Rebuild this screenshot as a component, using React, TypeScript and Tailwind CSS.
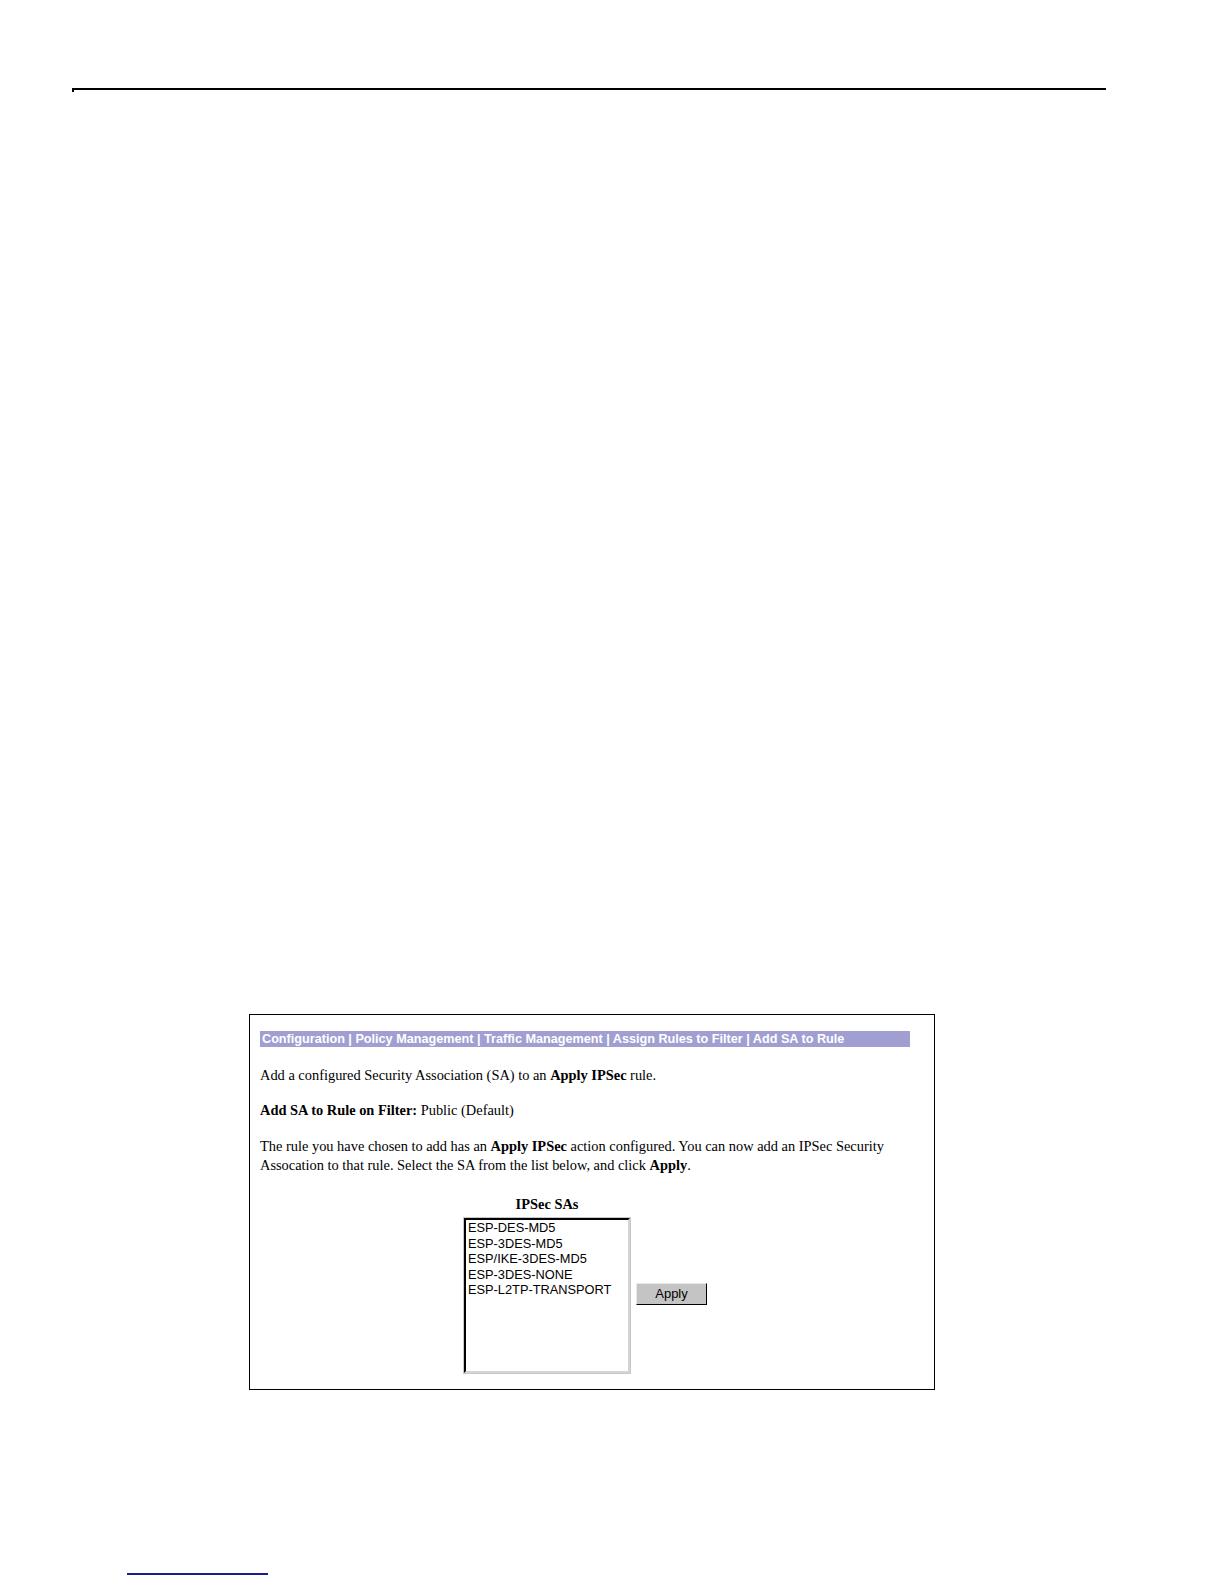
import React from 'react';

const serif = { fontFamily: '"Liberation Serif", "Times New Roman", serif' };
const sans = { fontFamily: '"Liberation Sans", Arial, sans-serif' };

const sas = ['ESP-DES-MD5', 'ESP-3DES-MD5', 'ESP/IKE-3DES-MD5', 'ESP-3DES-NONE', 'ESP-L2TP-TRANSPORT'];

const App = () => {
    return (
        <div className="relative w-[1224px] h-[1584px] bg-white text-black">
            {/* page header rule */}
            <div className="pt-[88px] pl-[72px]">
                <div className="w-[1034px] h-[2px] bg-black" />
                <div className="w-[2px] h-[2px] bg-black" />
            </div>

            {/* screenshot frame */}
            <div className="mt-[922px] ml-[249px] w-[686px] h-[376px] border border-black pt-[16px] pl-[10px]" style={serif}>
                <div
                    className="w-[650px] h-[16px] bg-[#a19fd2] text-white font-bold text-[12.65px] leading-[16px] pl-[2px] whitespace-nowrap"
                    style={sans}
                >
                    Configuration | Policy Management | Traffic Management | Assign Rules to Filter | Add SA to Rule
                </div>
                <p className="mt-[19px] text-[14.4px] leading-[18px]">
                    Add a configured Security Association (SA) to an <b>Apply IPSec</b> rule.
                </p>
                <p className="mt-[17px] text-[14.4px] leading-[18px]">
                    <b>Add SA to Rule on Filter:</b> Public (Default)
                </p>
                <p className="mt-[18px] text-[14.4px] leading-[19px] w-[660px]">
                    The rule you have chosen to add has an <b>Apply IPSec</b> action configured. You can now add an IPSec Security Assocation to that rule. Select the SA from the list below, and click <b>Apply</b>.
                </p>
                <div className="flex items-end mt-[20px] ml-[203px]">
                    <div className="flex flex-col items-center">
                        <div className="font-bold text-[14.4px] leading-[18px] mb-[4px]">IPSec SAs</div>
                        <div className="border border-[#c8c8c8] p-0">
                            <div
                                className="w-[166px] h-[155px] border-2 border-t-black border-l-black border-r-[#d4d4d4] border-b-[#d4d4d4] bg-white text-[12.8px] leading-[15.5px] pl-[2px]"
                                style={sans}
                            >
                                {sas.map((s) => (
                                    <div key={s}>{s}</div>
                                ))}
                            </div>
                        </div>
                    </div>
                    <button
                        className="ml-[5px] mb-[69px] w-[71px] h-[22px] bg-[#c4c4c4] border border-t-[#e8e8e8] border-l-[#e8e8e8] border-r-black border-b-black text-[13px] leading-[18px]"
                        style={sans}
                    >
                        Apply
                    </button>
                </div>
            </div>

            {/* footer link rule */}
            <div className="mt-[183px] ml-[127px] w-[141px] h-[2px] bg-[#1c1c8c]" />
        </div>
    );
};

export default App;
